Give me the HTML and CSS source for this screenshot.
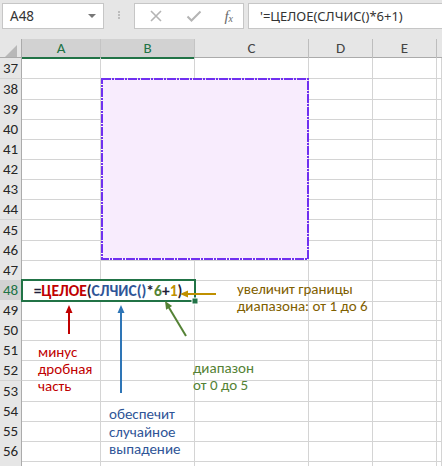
FILE: index.html
```html
<!DOCTYPE html>
<html lang="ru">

<head>
    <meta charset="UTF-8">
    <title>СЛЧИС</title>
    <link rel="stylesheet" href="styles.css">
</head>

<body>
    <div class="toolbar">
        <div class="namebox">
            <span>A48</span>
            <span class="drop"></span>
        </div>
        <div class="dots"><i></i><i></i><i></i></div>
        <div class="buttons">
            <svg class="btn" width="14" height="14" viewBox="0 0 14 14">
                <path d="M2 2 L12 12 M12 2 L2 12" stroke="#b4b4b4" stroke-width="1.6" fill="none" />
            </svg>
            <svg class="btn" width="16" height="14" viewBox="0 0 16 14">
                <path d="M1.5 7.5 L5.5 11.5 L14.5 2.5" stroke="#b4b4b4" stroke-width="2" fill="none" />
            </svg>
            <span class="fx"><i>f</i><sub>x</sub></span>
        </div>
        <div class="formula">'=ЦЕЛОЕ(СЛЧИС()*6+1)</div>
    </div>

    <div class="sheet">
        <div class="heads">
            <div class="corner"><span class="tri"></span></div>
            <div class="sel">A</div>
            <div class="sel">B</div>
            <div>C</div>
            <div>D</div>
            <div>E</div>
            <div class="rest"></div>
        </div>
        <div class="rows"></div>
    </div>

    <svg class="overlay" width="442" height="466" viewBox="0 0 442 466">
        <rect x="102" y="79" width="206" height="180" fill="#f8ecfd" stroke="#7030f0" stroke-width="2"
            stroke-dasharray="9 1 2 1" />
        <!-- selection of merged A48:B48 -->
        <rect x="22" y="280" width="173" height="21" fill="none" stroke="#217346" stroke-width="2" />
        <rect x="192" y="298" width="6" height="6" fill="#217346" stroke="#fff" stroke-width="1" />
        <!-- arrows -->
        <line x1="69" y1="334" x2="69" y2="311" stroke="#c00000" stroke-width="2" />
        <polygon points="69,305 65.5,313 72.5,313" fill="#c00000" />
        <line x1="121" y1="393" x2="121" y2="311" stroke="#2e75b6" stroke-width="2" />
        <polygon points="121,305 117.5,313 124.5,313" fill="#2e75b6" />
        <line x1="216" y1="294" x2="186" y2="294" stroke="#bf9000" stroke-width="2" />
        <polygon points="180,294 188,290.5 188,297.5" fill="#bf9000" />
        <line x1="186" y1="336" x2="168" y2="306" stroke="#548235" stroke-width="2" />
        <polygon points="165,301 172.1,306.1 166.1,309.7" fill="#548235" />
    </svg>

    <div class="note gold">увеличит границы<br>диапазона: от 1 до 6</div>
    <div class="note red">минус<br>дробная<br>часть</div>
    <div class="note blue">обеспечит<br>случайное<br>выпадение</div>
    <div class="note green">диапазон<br>от 0 до 5</div>

    <script>
        const rows = document.querySelector('.rows')
        for (let n = 37; n <= 57; n++) {
            const row = document.createElement('div')
            row.className = 'row'
            // a few rows come out one pixel taller on screen
            if (n == 37 || n == 44 || n == 52) row.classList.add('tall')
            const label = n == 57 ? '' : n
            if (n == 48) {
                row.innerHTML = '<div class="rh sel">48</div>' +
                    '<div class="cell merged"><b>=<span class="r">ЦЕЛОЕ</span>(<span class="b">СЛЧИС()</span>*<span class="g">6</span>+<span class="y">1</span>)</b></div>' +
                    '<div class="cell"></div><div class="cell"></div><div class="cell"></div><div class="cell"></div>'
            } else {
                row.innerHTML = '<div class="rh">' + label + '</div>' + '<div class="cell"></div>'.repeat(6)
            }
            rows.appendChild(row)
        }
    </script>
</body>

</html>
```
FILE: styles.css
```css
* {
    margin: 0;
    padding: 0;
    box-sizing: border-box;
}

body {
    width: 442px;
    height: 466px;
    overflow: hidden;
    background: #fff;
    position: relative;
    font-family: Carlito, Lato, "Liberation Sans", sans-serif;
    color: #262626;
}

.toolbar {
    height: 39px;
    background: #e6e6e6;
    display: flex;
    align-items: flex-start;
    padding-top: 3px;
    font-family: "Noto Sans", "Open Sans", sans-serif;
}

.namebox,
.buttons,
.formula {
    height: 26px;
    background: #fff;
    border: 1px solid #c6c6c6;
    display: flex;
    align-items: center;
}

.namebox {
    width: 102px;
    margin-left: 2px;
    padding: 0 7px 0 7px;
    justify-content: space-between;
    font-size: 13.5px;
    color: #333;
}

.drop {
    width: 0;
    height: 0;
    border-left: 4px solid transparent;
    border-right: 4px solid transparent;
    border-top: 4px solid #777;
}

.dots {
    width: 30px;
    display: flex;
    flex-direction: column;
    align-items: center;
    gap: 1px;
    padding-top: 8px;
}

.dots i {
    display: block;
    width: 2px;
    height: 2px;
    background: #bcbcbc;
}

.buttons {
    width: 110px;
    padding: 0 10px 0 14px;
    justify-content: space-between;
}

.fx {
    font-family: "Liberation Serif", serif;
    color: #6a6a6a;
    font-size: 15px;
}

.fx sub {
    font-size: 10px;
    font-style: italic;
    vertical-align: -1px;
}

.formula {
    flex: 1;
    margin-left: 4px;
    border-right: none;
    padding-left: 11px;
    font-size: 13px;
    color: #333;
}

.heads,
.row {
    display: grid;
    grid-template-columns: 22px 79px 94px 114px 64px 64px 1fr;
}

.heads {
    height: 19px;
    background: #e6e6e6;
    border-bottom: 1px solid #ababab;
}

.heads div {
    border-right: 1px solid #bdbdbd;
    text-align: center;
    font-size: 15px;
    line-height: 18px;
    color: #444;
}

.heads .sel {
    background: #d2d2d2;
    color: #217346;
    border-bottom: 2px solid #217346;
    border-right-color: #c4c4c4;
}

.heads .rest {
    border-right: none;
}

.corner {
    position: relative;
    border-right-color: #ababab !important;
}

.tri {
    position: absolute;
    right: 4px;
    bottom: 2px;
    width: 0;
    height: 0;
    border-left: 12px solid transparent;
    border-bottom: 12px solid #b8b8b8;
}

.row {
    height: 20px;
}

.row.tall {
    height: 21px;
}

.rh {
    background: #e6e6e6;
    border-right: 1px solid #ababab;
    border-bottom: 1px solid #d4d4d4;
    text-align: center;
    font-size: 15px;
    line-height: 20px;
    color: #262626;
}

.rh.sel {
    background: #d2d2d2;
    color: #217346;
}

.cell {
    border-right: 1px solid #d4d4d4;
    border-bottom: 1px solid #d4d4d4;
}

.merged {
    grid-column: span 2;
    text-align: center;
    font-size: 15.5px;
    line-height: 21px;
    color: #1f1f3a;
}

.merged .r {
    color: #c00000;
}

.merged .b {
    color: #2f5597;
}

.merged .g {
    color: #548235;
}

.merged .y {
    color: #bf8f00;
}

.overlay {
    position: absolute;
    top: 0;
    left: 0;
    pointer-events: none;
}

.note {
    position: absolute;
    font-size: 15px;
    line-height: 17px;
    white-space: nowrap;
}

.gold {
    left: 237px;
    top: 281px;
    color: #7f6000;
}

.red {
    left: 38px;
    top: 344px;
    color: #c00000;
}

.blue {
    left: 109px;
    top: 406px;
    line-height: 17.5px;
    color: #2f5597;
}

.green {
    left: 193px;
    top: 360px;
    color: #548235;
}
```
